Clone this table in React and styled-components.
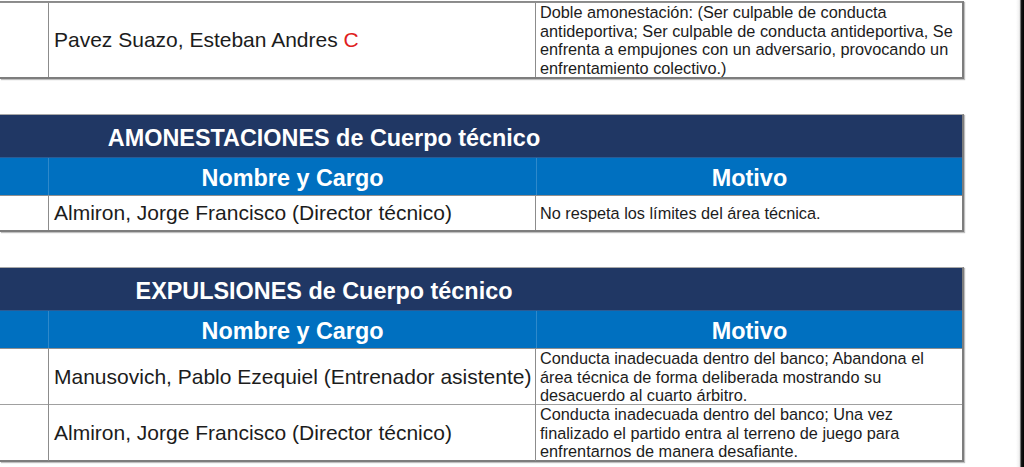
import styled, { createGlobalStyle } from 'styled-components';

const GlobalStyle = createGlobalStyle`
  html, body {
    margin: 0;
    padding: 0;
    background: #fff;
    overflow: hidden;
  }
  body {
    font-family: "Liberation Sans", Arial, sans-serif;
    color: #1c1c1c;
  }
`;

// data
const sections = [
  {
    title: 'AMONESTACIONES de Cuerpo técnico',
    rows: [
      { name: 'Almiron, Jorge Francisco (Director técnico)', reason: 'No respeta los límites del área técnica.', height: 34 },
    ],
  },
  {
    title: 'EXPULSIONES de Cuerpo técnico',
    rows: [
      {
        name: 'Manusovich, Pablo Ezequiel (Entrenador asistente)',
        reason: 'Conducta inadecuada dentro del banco; Abandona el área técnica de forma deliberada mostrando su desacuerdo al cuarto árbitro.',
        height: 55,
      },
      {
        name: 'Almiron, Jorge Francisco (Director técnico)',
        reason: 'Conducta inadecuada dentro del banco; Una vez finalizado el partido entra al terreno de juego para enfrentarnos de manera desafiante.',
        height: 55,
      },
    ],
  },
];

function App() {
  return (
    <Screen>
      <GlobalStyle />
      <Page>
        <Table $first>
          <Row $height={74} $first>
            <Cell />
            <NameCell>
              <span>Pavez Suazo, Esteban Andres <Red>C</Red></span>
            </NameCell>
            <ReasonCell>
              Doble amonestación: (Ser culpable de conducta antideportiva; Ser culpable de conducta antideportiva, Se enfrenta a empujones con un adversario, provocando un enfrentamiento colectivo.)
            </ReasonCell>
          </Row>
        </Table>

        {sections.map((s) => (
          <Table key={s.title}>
            <TitleRow>
              <Title>{s.title}</Title>
            </TitleRow>
            <HeaderRow>
              <HeadCell />
              <HeadCell>Nombre y Cargo</HeadCell>
              <HeadCell>Motivo</HeadCell>
            </HeaderRow>
            {s.rows.map((r, i) => (
              <Row key={i} $height={r.height} $first={i === 0}>
                <Cell />
                <NameCell>{r.name}</NameCell>
                <ReasonCell>{r.reason}</ReasonCell>
              </Row>
            ))}
          </Table>
        ))}
      </Page>
      <Edge />
    </Screen>
  );
}

const Screen = styled.div`
  display: flex;
  width: 1024px;
  height: 467px;
  overflow: hidden;
`;

const Page = styled.main`
  flex: 1;
  display: flex;
  flex-direction: column;
  gap: 35px;
  padding-top: 1px;
`;

const Edge = styled.div`
  width: 8px;
  background: linear-gradient(90deg, #fff 0, #f2f2f2 3px, #d9d9d9 4px, #1a1a1a 5px, #000 8px);
`;

const Table = styled.section`
  width: 962px;
  flex: none;
  border-right: 2px solid #7d7d7d;
  border-bottom: 2px solid #7d7d7d;
  border-top: 1px solid ${(p) => (p.$first ? '#8a8a8a' : '#a8a8a8')};
  box-shadow: 1px 1px 1px rgba(0, 0, 0, 0.25);
`;

const TitleRow = styled.div`
  height: 42px;
  background: #203764;
  display: flex;
  align-items: center;
`;

const Title = styled.h2`
  margin: 0;
  width: 648px;
  text-align: center;
  color: #fff;
  font-size: 23.4px;
  line-height: 26px;
  font-weight: bold;
  padding-top: 3px;
`;

const HeaderRow = styled.div`
  display: grid;
  grid-template-columns: 48px 488px 1fr;
  height: 37px;
  background: #0070c0;
  border-top: 1px solid #2b5b94;
`;

const HeadCell = styled.div`
  display: flex;
  align-items: center;
  justify-content: center;
  padding-top: 4px;
  color: #fff;
  font-size: 23.4px;
  font-weight: bold;
  border-left: 1px solid rgba(255, 255, 255, 0.18);

  &:first-child {
    border-left: none;
  }
`;

const Row = styled.div`
  display: grid;
  grid-template-columns: 48px 488px 1fr;
  height: ${(p) => p.$height}px;
  border-top: 1px solid ${(p) => (p.$first ? '#8f8f8f' : '#a0a0a0')};
  background: #fff;
`;

const Cell = styled.div``;

const NameCell = styled.div`
  display: flex;
  align-items: center;
  padding-left: 5px;
  font-size: 21px;
  border-left: 1px solid #8c8c8c;
  border-right: 1px solid #8c8c8c;
  white-space: nowrap;
`;

const ReasonCell = styled.div`
  padding: 0 4px;
  font-size: 16.3px;
  line-height: 18.5px;
  display: flex;
  align-items: center;
`;

const Red = styled.span`
  color: #e02020;
`;

export default App;
